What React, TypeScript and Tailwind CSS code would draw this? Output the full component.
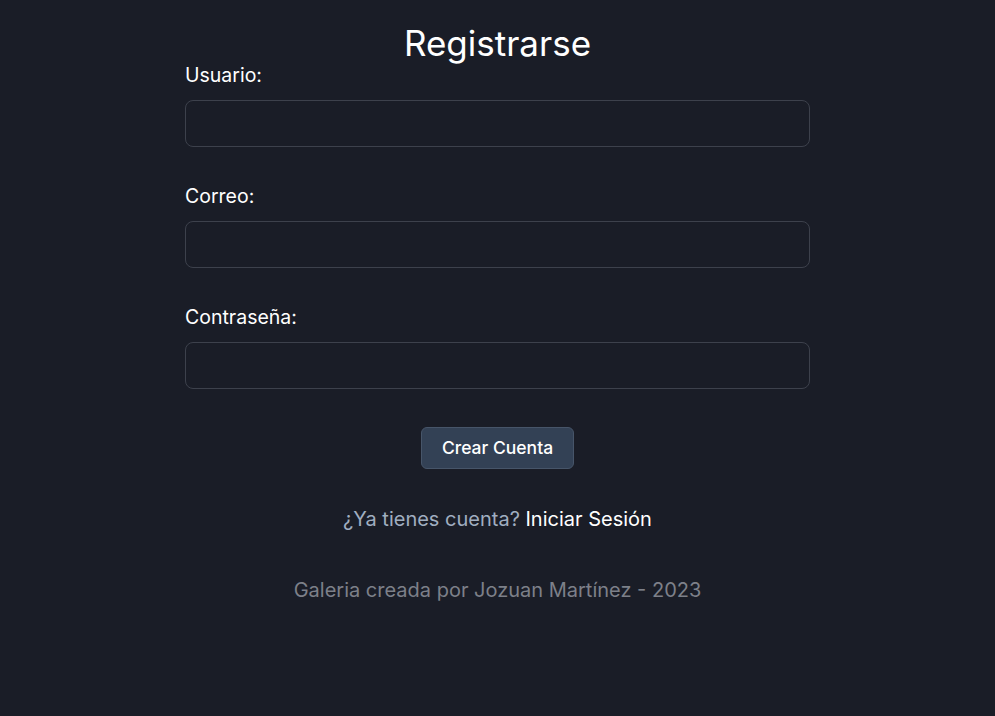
import React from 'react';

export default function App() {
  return (
    <div
      className="min-h-screen w-full bg-[#1a1d27] text-white"
      style={{ fontFamily: 'Inter, "Noto Sans", sans-serif' }}
    >
      <div className="mx-auto w-[625px] pt-[25px]">
        <h1 className="text-center text-[35px] leading-[36px] font-normal">Registrarse</h1>
        <form className="flex flex-col">
          <label className="text-[19.5px] leading-7">Usuario:</label>
          <input
            type="text"
            className="mt-[11px] h-[47px] w-full rounded-lg border border-[#3d414c] bg-transparent px-3 outline-none"
          />
          <label className="mt-[35px] text-[19.5px] leading-7">Correo:</label>
          <input
            type="email"
            className="mt-[11px] h-[47px] w-full rounded-lg border border-[#3d414c] bg-transparent px-3 outline-none"
          />
          <label className="mt-[35px] text-[19.5px] leading-7">Contraseña:</label>
          <input
            type="password"
            className="mt-[11px] h-[47px] w-full rounded-lg border border-[#3d414c] bg-transparent px-3 outline-none"
          />
          <div className="mt-[38px] flex justify-center">
            <button
              type="button"
              className="rounded-md border border-[#475569] bg-[#334155] px-[20px] py-2 text-[17.5px] leading-6 font-medium text-white"
            >
              Crear Cuenta
            </button>
          </div>
        </form>
        <p className="mt-[36px] text-center text-xl leading-7 text-[#a0aec0]">
          ¿Ya tienes cuenta? <a className="text-white">Iniciar Sesión</a>
        </p>
        <p className="mt-[43px] text-center text-xl leading-7 text-[#7d8089]">
          Galeria creada por Jozuan Martínez - 2023
        </p>
      </div>
    </div>
  );
}
